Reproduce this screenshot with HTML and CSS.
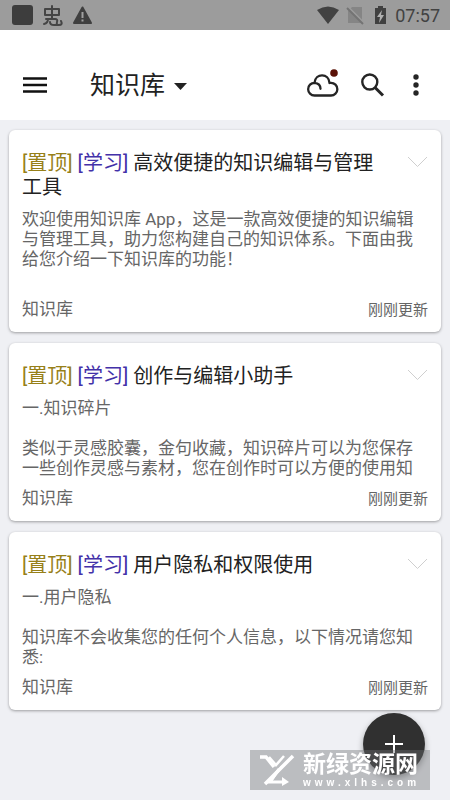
FILE: index.html
```html
<!DOCTYPE html>
<html lang="zh-CN">
<head>
<meta charset="utf-8">
<meta name="viewport" content="width=device-width, initial-scale=1">
<title>知识库</title>
<link rel="stylesheet" href="styles.css">
</head>
<body>
<div class="status">
  <svg width="84" height="24" viewBox="0 0 84 24" aria-hidden="true">
    <rect x="0" y="2" width="21" height="20" rx="3" fill="#3d3d3d"/>
    <g fill="none" stroke="#454545" stroke-width="2" stroke-linecap="round" stroke-linejoin="round"><path d="M33 6h14v6H33zM40 3v13M34 16h9q3 0 2 3-1 3 2 3 4 0 2-4M32 21q4-1 4-5M38 19q0 3 4 3h5"/></g>
    <path d="M70.500 4.500 79 20H62z" fill="#3f3f3f" stroke="#3f3f3f" stroke-width="2" stroke-linejoin="round"/>
    <path d="M70.500 9v6M70.500 16.500v2" stroke="#a0a0a0" stroke-width="2"/>
  </svg>
  <div class="status-right">
    <svg width="70" height="24" viewBox="0 0 70 24" aria-hidden="true">
      <path d="M0 7q11-7 22 0L11 21z" fill="#424242"/>
      <path d="M35 4h10v16H31V8z" fill="#858585"/>
      <path d="M31 4 47 20" stroke="#9c9c9c" stroke-width="2"/>
      <path d="M30 5 46 21" stroke="#747474" stroke-width="2"/>
      <path d="M58 5h3V3h5v2h3v16H58z" fill="#404040"/>
      <path d="m65 7-5 7h3l-1 6 5-8h-3z" fill="#b0b0b0"/>
    </svg>
    <time>07:57</time>
  </div>
</div>
<header class="bar">
  <button class="icon" aria-label="菜单"><svg width="24" height="18" viewBox="0 0 24 18"><path d="M0 2.500h24M0 9h24M0 15.500h24" stroke="#111" stroke-width="2.500"/></svg></button>
  <button class="library">知识库<svg width="13" height="7" viewBox="0 0 13 7"><path d="M0 0h13L6.500 7z" fill="#222"/></svg></button>
  <div class="actions">
    <button class="icon" aria-label="同步"><svg width="34" height="32" viewBox="0 0 34 32"><path d="M9.500 29.500H26a6.300 6.300 0 0 0 0-12.700q-1 0-1.500.2C24 7 10.500 6.500 9.500 16.800a6.300 6.300 0 0 0 0 12.700M9.500 16.800q6 .5 6 6" fill="none" stroke="#252525" stroke-width="2.300" stroke-linecap="round" stroke-linejoin="round"/><circle cx="29" cy="7" r="3.800" fill="#5a1207"/></svg></button>
    <button class="icon" aria-label="搜索"><svg width="24" height="24" viewBox="0 0 24 24"><circle cx="8.800" cy="9" r="7.500" fill="none" stroke="#252525" stroke-width="2.400"/><path d="m14 14.500 8 8" stroke="#252525" stroke-width="3"/></svg></button>
    <button class="icon" aria-label="更多"><svg width="6" height="24" viewBox="0 0 6 24"><g fill="#252525"><circle cx="3" cy="4" r="2.700"/><circle cx="3" cy="12" r="2.700"/><circle cx="3" cy="20" r="2.700"/></g></svg></button>
  </div>
</header>
<main class="list">
  <article class="card">
    <div class="head">
      <h2><span class="pin">[置顶]</span> <span class="tag">[学习]</span> 高效便捷的知识编辑与管理工具</h2>
      <button class="icon more" aria-label="展开"><svg width="20" height="12" viewBox="0 0 20 12"><path d="m0 1 9.500 9.500L19 1" fill="none" stroke="#cfcfcf"/></svg></button>
    </div>
    <p class="text">欢迎使用知识库 App，这是一款高效便捷的知识编辑与管理工具，助力您构建自己的知识体系。下面由我给您介绍一下知识库的功能！</p>
    <footer class="foot"><span>知识库</span><small>刚刚更新</small></footer>
  </article>
  <article class="card">
    <div class="head">
      <h2><span class="pin">[置顶]</span> <span class="tag">[学习]</span> 创作与编辑小助手</h2>
      <button class="icon more" aria-label="展开"><svg width="20" height="12" viewBox="0 0 20 12"><path d="m0 1 9.500 9.500L19 1" fill="none" stroke="#cfcfcf"/></svg></button>
    </div>
    <p class="text">一.知识碎片<br><br>类似于灵感胶囊，金句收藏，知识碎片可以为您保存一些创作灵感与素材，您在创作时可以方便的使用知</p>
    <footer class="foot"><span>知识库</span><small>刚刚更新</small></footer>
  </article>
  <article class="card">
    <div class="head">
      <h2><span class="pin">[置顶]</span> <span class="tag">[学习]</span> 用户隐私和权限使用</h2>
      <button class="icon more" aria-label="展开"><svg width="20" height="12" viewBox="0 0 20 12"><path d="m0 1 9.500 9.500L19 1" fill="none" stroke="#cfcfcf"/></svg></button>
    </div>
    <p class="text">一.用户隐私<br><br>知识库不会收集您的任何个人信息，以下情况请您知悉:</p>
    <footer class="foot"><span>知识库</span><small>刚刚更新</small></footer>
  </article>
</main>
<button class="fab" aria-label="新建"><svg width="18" height="18" viewBox="0 0 18 18"><path d="M9 0v18M0 9h18" stroke="#fff" stroke-width="2"/></svg></button>
<div class="mark">
  <svg width="36" height="32" viewBox="0 0 36 32" aria-hidden="true"><g fill="none" stroke="#fff"><path d="M0 3h6l8 10M33 2 5 30" stroke-width="3.500"/><path d="M9 3l7 8 8-9" stroke-width="2.500"/><path d="M19 15v0L10 28h14" stroke-width="3"/><path d="M22 12 12 26" stroke-width="2"/></g><path d="m22 23 7 5-7 4z" fill="#fff"/></svg>
  <div class="mark-text"><strong>新绿资源网</strong><span>www.xlhs.com</span></div>
</div>
</body>
</html>
```
FILE: styles.css
```css
* { box-sizing: border-box; }

body {
  margin: 0;
  min-height: 100vh;
  background: #eff0f4;
  color: #222;
  font-family: Roboto, "Noto Sans CJK SC", sans-serif;
}

button {
  padding: 0;
  border: 0;
  background: none;
  color: inherit;
  font: inherit;
}

svg { display: block; }

.status {
  display: flex;
  align-items: center;
  justify-content: space-between;
  height: 30px;
  padding: 0 10px 0 12px;
  background: #9c9c9c;
}

.status-right {
  display: flex;
  align-items: center;
  gap: 8px;
  color: #424242;
  font-size: 18px;
}

.bar {
  display: flex;
  align-items: center;
  height: 90px;
  padding: 20px 31px 0 23px;
  background: #fff;
}

.library {
  display: flex;
  align-items: center;
  gap: 9px;
  margin-left: 43px;
  padding-top: 2px;
  font-size: 25px;
  line-height: 36px;
}

.actions {
  display: flex;
  align-items: center;
  gap: 22px;
  margin-left: auto;
}

.actions .icon:first-child { padding-bottom: 6px; }
.actions .icon:last-child { margin-left: 6px; }

.list {
  display: flex;
  flex-direction: column;
  gap: 11px;
  padding: 10px 9px;
}

.card {
  padding: 21px 13px 10px;
  border-radius: 6px;
  background: #fff;
  box-shadow: 0 1px 3px rgba(0, 0, 0, 0.35);
}

.head {
  display: flex;
  align-items: flex-start;
  justify-content: space-between;
  gap: 32px;
}

h2 {
  margin: 0;
  font-size: 20px;
  font-weight: 400;
  line-height: 24px;
}

.pin { color: #978018; }
.tag { color: #4331a9; }
.more { padding-top: 5px; }

.text {
  min-height: 80px;
  margin: 10px 0 7px;
  color: #666;
  font-size: 17px;
  line-height: 20px;
}

.foot {
  display: flex;
  align-items: center;
  justify-content: space-between;
  color: #666;
  font-size: 17px;
  line-height: 26px;
}

.foot small {
  padding-top: 2px;
  font-size: 15px;
  line-height: 24px;
}

.fab {
  position: fixed;
  right: 25px;
  bottom: 25px;
  display: grid;
  place-items: center;
  width: 62px;
  height: 62px;
  border-radius: 50%;
  background: #303030;
  box-shadow: 0 3px 6px rgba(0, 0, 0, 0.35);
}

.mark {
  position: fixed;
  right: 20px;
  bottom: 10px;
  display: flex;
  align-items: center;
  gap: 7px;
  height: 40px;
  padding: 0 8px 0 10px;
  background: rgba(110, 112, 116, 0.4);
  color: #fff;
}

.mark-text {
  display: flex;
  flex-direction: column;
  width: 119px;
}

.mark strong {
  font-size: 23px;
  font-weight: 700;
  line-height: 25px;
}

.mark span {
  font-family: "Liberation Sans", sans-serif;
  font-size: 10px;
  font-weight: 700;
  line-height: 12px;
  letter-spacing: 4px;
}
```
